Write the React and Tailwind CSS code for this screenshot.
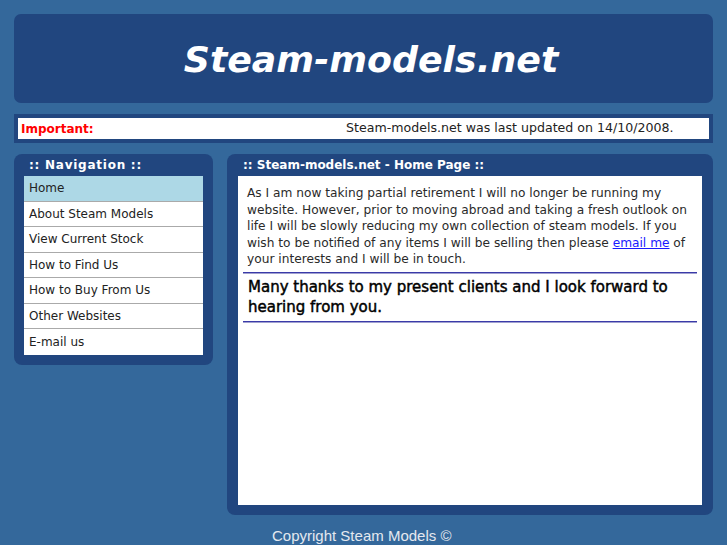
export default function App() {
  const nav = ["Home", "About Steam Models", "View Current Stock", "How to Find Us", "How to Buy From Us", "Other Websites", "E-mail us"];
  return (
    <div className="w-[727px] h-[545px] overflow-hidden bg-[#34689b] pt-[14px] px-[14px]" style={{ fontFamily: '"DejaVu Sans", sans-serif' }}>
      <div className="h-[89px] rounded-[7px] bg-[#21467f] flex items-center justify-center">
        <div className="text-white font-bold italic text-[36.3px] leading-none mt-[4px] pl-[15px]">Steam-models.net</div>
      </div>
      <div className="mt-[11px] h-[29px] bg-[#21467f] p-[4px]">
        <div className="h-[21px] bg-white flex items-center pl-[3px]">
          <span className="text-[#ff0000] font-bold text-[12px] w-[325px]">Important:</span>
          <span className="text-[#222] text-[12.6px]">Steam-models.net was last updated on 14/10/2008.</span>
        </div>
      </div>
      <div className="mt-[11px] flex items-start gap-[14px]">
        <div className="w-[199px] rounded-[8px] bg-[#21467f] px-[10px] pb-[10px]">
          <div className="h-[22px] flex items-center pl-[5px] text-white font-bold text-[12px] tracking-[0.75px]">:: Navigation ::</div>
          <div className="flex flex-col">
            {nav.map((n, i) => (
              <div key={n} className={`h-[25.5px] flex items-center pl-[5px] text-[12px] text-[#222] ${i === 0 ? "bg-[#add8e6]" : "bg-white"} ${i < nav.length - 1 ? "border-b border-[#aaaaaa]" : ""}`}>{n}</div>
            ))}
          </div>
        </div>
        <div className="w-[486px] h-[361px] rounded-[8px] bg-[#21467f] px-[11px] pb-[10px] flex flex-col">
          <div className="h-[22px] flex items-center pl-[5px] text-white font-bold text-[12px]">:: Steam-models.net - Home Page ::</div>
          <div className="flex-1 bg-white px-[5px] pt-[9px]">
            <p className="px-[4px] text-[12.2px] leading-[16.5px] text-[#2a2a2a]">
              As I am now taking partial retirement I will no longer be running my website. However, prior to moving abroad and taking a fresh outlook on life I will be slowly reducing my own collection of steam models. If you wish to be notified of any items I will be selling then please <a href="#" className="text-[#1a1aff] underline">email me</a> of your interests and I will be in touch.
            </p>
            <div className="mt-[4px] h-[2px] bg-[#3a3aa8] border-b border-[#a0a0d0]" />
            <p className="px-[5px] pt-[3px] pb-[4px] text-[15px] leading-[20px] text-black [-webkit-text-stroke:0.45px_black]">
              Many thanks to my present clients and I look forward to hearing from you.
            </p>
            <div className="mt-[0px] h-[2px] bg-[#3a3aa8] border-b border-[#a0a0d0]" />
          </div>
        </div>
      </div>
      <div className="mt-[10px] pl-[258px] text-[15px] text-[#e4e8ef]" style={{ fontFamily: '"Liberation Sans", Arial, sans-serif' }}>Copyright Steam Models ©</div>
    </div>
  );
}
